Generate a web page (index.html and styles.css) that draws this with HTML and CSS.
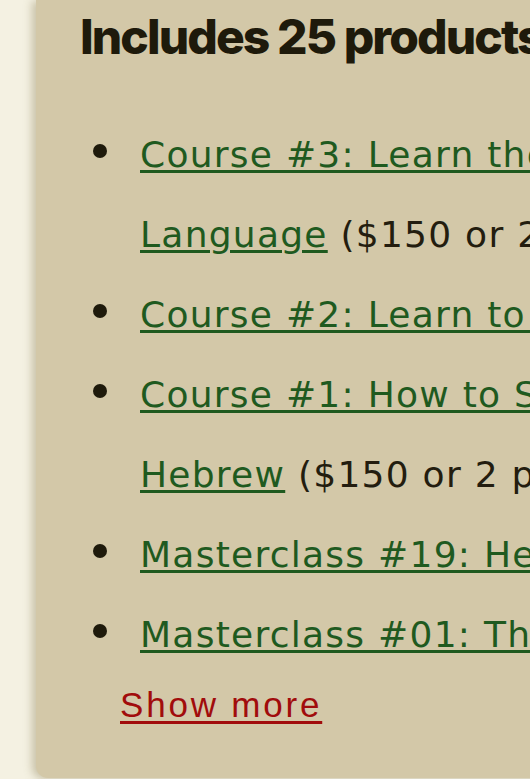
FILE: index.html
```html
<!DOCTYPE html>
<html lang="en">
<head>
<meta charset="utf-8">
<title>Includes 25 products</title>
<link rel="stylesheet" href="styles.css">
</head>
<body>
<div class="page">
  <section class="card">
    <h2 class="card-title">Includes 25 products</h2>
    <ul class="product-list">
      <li class="product"><a href="#">Course #3: Learn the Basics of the Hebrew<br>Language</a> ($150 or 2 payments of $80)</li>
      <li class="product"><a href="#">Course #2: Learn to Read Hebrew in 10 Days</a> ($150)</li>
      <li class="product"><a href="#">Course #1: How to Start Learning Biblical<br>Hebrew</a> ($150 or 2 payments of $80)</li>
      <li class="product"><a href="#">Masterclass #19: Hebrew Verbs</a> ($40)</li>
      <li class="product"><a href="#">Masterclass #01: The Hebrew Alphabet</a> ($40)</li>
    </ul>
    <a class="show-more" href="#">Show more</a>
  </section>
</div>
</body>
</html>
```

FILE: styles.css
```css
html, body {
  margin: 0;
  padding: 0;
}

body {
  background: #f4f1e2;
  overflow: hidden;
  width: 530px;
  height: 779px;
}

.page {
  padding: 0 0 0 36px;
}

.card {
  width: 900px;
  box-sizing: border-box;
  background: #d3c8a8;
  border-radius: 0 0 12px 12px;
  box-shadow: -4px 1px 9px rgba(120, 105, 60, 0.35);
  padding: 8px 0 45px 44px;
  color: #231d0f;
}

.card-title {
  margin: 0;
  font-family: Inter, "Liberation Sans", sans-serif;
  font-weight: 800;
  font-size: 48px;
  line-height: 58px;
  letter-spacing: -0.04em;
  color: #1e1a0b;
  white-space: nowrap;
}

.product-list {
  list-style: none;
  margin: 49px 0 0 0;
  padding: 0 0 0 60px;
  font-family: "DejaVu Sans", Verdana, sans-serif;
  font-size: 36px;
  line-height: 80px;
  letter-spacing: 0.035em;
  white-space: nowrap;
}

.product {
  position: relative;
}

.product::before {
  content: "";
  position: absolute;
  left: -47px;
  top: 29px;
  width: 14px;
  height: 14px;
  border-radius: 50%;
  background: #1e1a0b;
}

.product a {
  color: #1f5a1f;
  text-decoration: underline;
  text-decoration-thickness: 3px;
  text-underline-offset: 3px;
}

.show-more {
  display: block;
  width: max-content;
  margin: 2px 0 0 40px;
  font-family: "Liberation Sans", Arial, sans-serif;
  font-size: 35px;
  line-height: 56px;
  letter-spacing: 0.08em;
  color: #a10c0c;
  text-decoration: underline;
  text-decoration-thickness: 3px;
  text-underline-offset: 4px;
}
```
